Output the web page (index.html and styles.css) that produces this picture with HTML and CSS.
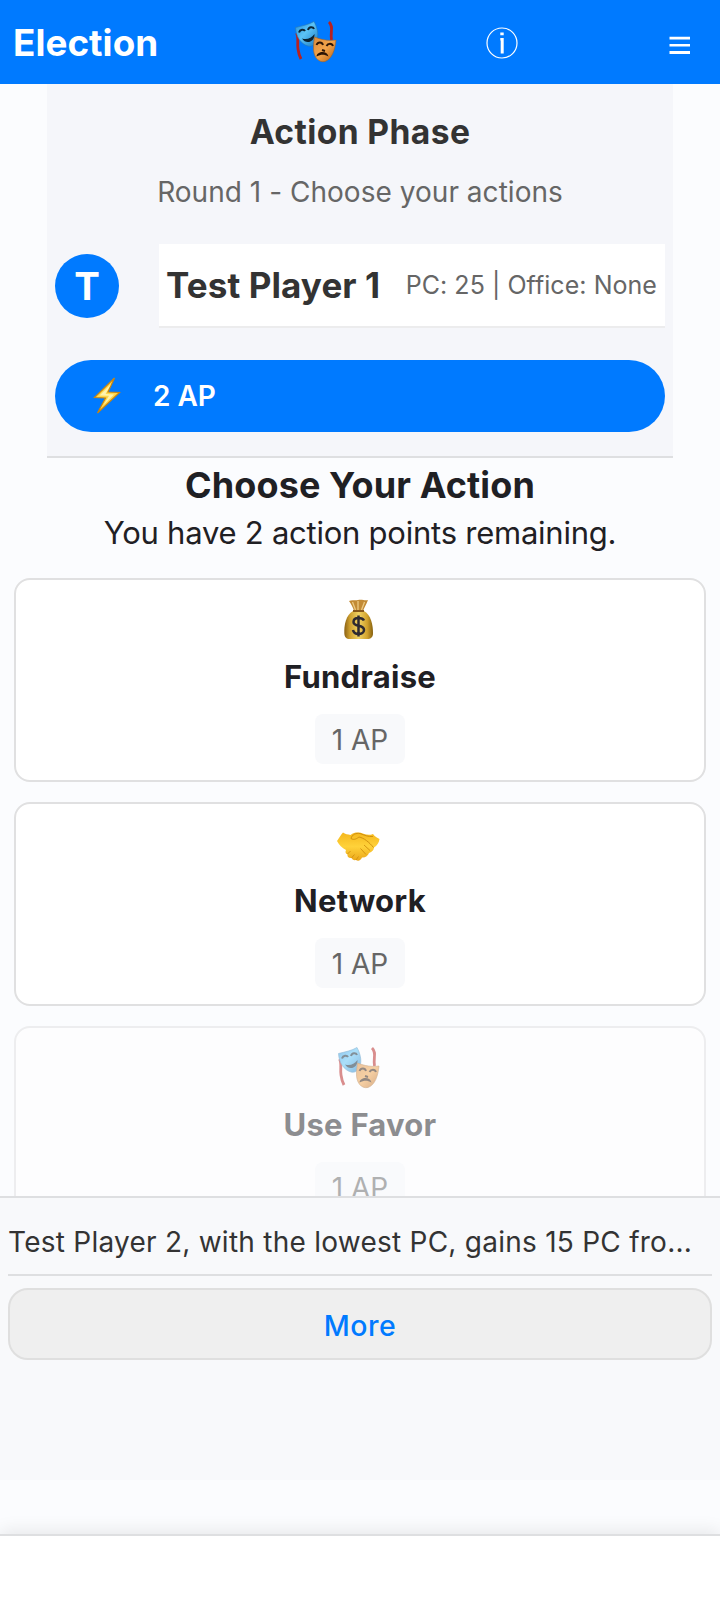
FILE: index.html
```html
<!DOCTYPE html>
<html lang="en">
<head>
<meta charset="utf-8">
<title>Election</title>
<link rel="stylesheet" href="styles.css">
</head>
<body>
<svg class="defs" aria-hidden="true">
  <defs>
    <linearGradient id="blue" x1="0" y1="0" x2="1" y2="1"><stop offset="0" stop-color="#238fdb"/><stop offset=".45" stop-color="#5cc3f7"/><stop offset="1" stop-color="#1779c4"/></linearGradient>
    <linearGradient id="orange" x1="0" y1="0" x2="1" y2="1"><stop offset="0" stop-color="#d98a3c"/><stop offset=".5" stop-color="#f3a54b"/><stop offset="1" stop-color="#b35d12"/></linearGradient>
    <linearGradient id="bag"><stop offset="0" stop-color="#8a6114"/><stop offset=".2" stop-color="#cfa02e"/><stop offset=".5" stop-color="#f0d264"/><stop offset=".8" stop-color="#d2a22c"/><stop offset="1" stop-color="#85600f"/></linearGradient>
    <linearGradient id="hand" x1="0" y1="0" x2="0" y2="1"><stop offset="0" stop-color="#f5b71c"/><stop offset=".5" stop-color="#ffd23a"/><stop offset="1" stop-color="#eba71a"/></linearGradient>
    <symbol id="masks" viewBox="0 0 44 44">
      <path d="M2.500 13C5 17 3 22 4 29C4.500 33 5.500 36 7 39" fill="none" stroke="#b8211f" stroke-width="2.800"/>
      <path d="M35 2C40 7 36 11 37.500 20" fill="none" stroke="#b8211f" stroke-width="2.800"/>
      <path d="M1.500 7.500C8 6 15 4.500 20 1.500C23 7 25 14 23 20C21 25 18 27 14 26C7 24 2 17 1.500 7.500Z" fill="url(#blue)" stroke="#2a78b0" stroke-width=".6"/>
      <path d="M5 12.500C6 9 10 9 11 11M14 10C15 6.500 19 6.500 20 9" fill="none" stroke="#0c2434" stroke-width="2"/>
      <path d="M8 18.500C13 20 17 18.500 20.500 14C21 22 12 25 8 18.500Z" fill="#0a2233"/>
      <path d="M20.500 17C28 20 35 21 42 20C41 30 38 39 31 41.500C24 43 19 36 19.500 27C19.700 23 20 20 20.500 17Z" fill="url(#orange)" stroke="#a76322" stroke-width=".6"/>
      <path d="M22.500 25C24 21.500 28 22 29 25M32.500 26C34 23 38 23 39 26M28 30L31 31" fill="none" stroke="#2f1707" stroke-width="1.900"/>
      <path d="M22.500 36.500C23 31 33 30 34.500 36.500C30 34 27 34.500 22.500 36.500Z" fill="#2b1405"/>
    </symbol>
    <symbol id="moneybag" viewBox="0 0 44 44">
      <path d="M12 3C15 1.500 18 3 21 2C25 1 28 3 31 2C29 7 27 10 26 13L17 13C16 9 14 6 12 3Z" fill="#c28a35"/>
      <path d="M15.500 4L18.500 12M21 3V12M27.500 4L24.500 12" stroke="#ecc983" stroke-width="1.300"/>
      <path d="M16 13C9 17 7 27 7.300 35C7.500 39 9 41 13 41H30C34 41 36 39 36 35C36 27 34 17 27 13Z" fill="url(#bag)"/>
      <path d="M16 13H27" stroke="#86571b" stroke-width="2"/>
      <path d="M27 22.500C26 20.500 24 20 21.500 20C18.500 20 16.500 21.500 16.500 24C16.500 29.500 27 26 27 32C27 34.500 24.500 36 21.500 36C18.500 36 16.500 34.500 16 32M21.500 17.500V38.500" fill="none" stroke="#2d2930" stroke-width="2.500"/>
    </symbol>
    <symbol id="handshake" viewBox="0 0 44 44">
      <g transform="translate(0 -4)">
      <path d="M0 23C2 20 4 16.500 6 14.500C8 16 11 16.500 13.500 17C16 15 18 14.500 21 14.500C26 14.500 30 18.500 36 16C38 19 41 20 42.500 21C42 25 40 27.500 37 29.500C37 32 35 34 32 35C31 38 28 40 25 39.500C24 42.500 21 43.500 19 42C17 42.500 15 41.500 14.500 40C12 40.500 10 39 10.500 36.500C8.500 36 8 34 9 32C5 30 2 27 0 23Z" fill="url(#hand)"/>
      <path d="M14 20.500C15 16.500 19 14.800 23 15.500C27 17 31 19 36 18.500M14 20.500C17 22.500 20 20.500 22 19C27 20 32 24 36.500 29.500" fill="none" stroke="#d0900f" stroke-width="1"/>
      <path d="M27 27L33 32.500M23.500 30.500L29 36.500M10.500 36L13.500 33M14.500 40L17.500 36.500M19 42L21.500 38.500" fill="none" stroke="#d0900f" stroke-width=".9"/>
      </g>
    </symbol>
  </defs>
</svg>

<header class="topbar">
  <h1 class="brand">Election</h1>
  <svg class="emoji"><use href="#masks"/></svg>
  <svg class="info" viewBox="0 0 34 34"><circle cx="17" cy="17" r="15" fill="none" stroke="#fff" stroke-width="1.200"/><path d="M15.300 6.500h3.400v2.800h-3.400zM15.300 12h3.400v15.500h-3v-13h-.4z" fill="#fff"/></svg>
  <svg class="menu" viewBox="0 0 22 20"><path d="M.5 1.800h20.500v2.700H.5zM.5 8.900h20.500v2.700H.5zM.5 16h20.500v2.900H.5z" fill="#fff"/></svg>
</header>

<main class="content">
  <section class="phase">
    <h2 class="phase-title">Action Phase</h2>
    <p class="phase-sub">Round 1 - Choose your actions</p>
    <div class="player">
      <div class="avatar">T</div>
      <div class="player-card">
        <span class="player-name">Test Player 1</span>
        <span class="player-stats">PC: 25 | Office: None</span>
      </div>
    </div>
    <div class="points">
      <svg class="bolt" viewBox="0 0 28 38"><path d="M21.500 1L1.500 20.500L12.500 21L4.500 36L26.500 15.500L15 15Z" fill="#ffd84d" stroke="#c98510" stroke-width="1.200"/><path d="M18 7L6.500 18.500L16 18.800L10.500 28L21 17.500L12.500 17Z" fill="#fff3b0"/></svg>
      <span class="points-label">2 AP</span>
    </div>
  </section>

  <section class="actions">
    <h2 class="actions-title">Choose Your Action</h2>
    <p class="actions-sub">You have 2 action points remaining.</p>
    <div class="cards">
      <article class="card">
        <svg class="emoji"><use href="#moneybag"/></svg>
        <h3 class="card-title">Fundraise</h3>
        <span class="cost">1 AP</span>
      </article>
      <article class="card">
        <svg class="emoji"><use href="#handshake"/></svg>
        <h3 class="card-title">Network</h3>
        <span class="cost">1 AP</span>
      </article>
      <article class="card disabled">
        <svg class="emoji"><use href="#masks"/></svg>
        <h3 class="card-title">Use Favor</h3>
        <span class="cost">1 AP</span>
      </article>
    </div>
  </section>
</main>

<section class="log">
  <p class="log-entry">Test Player 2, with the lowest PC, gains 15 PC fro...</p>
  <button class="more">More</button>
</section>
<footer class="bottombar"></footer>
</body>
</html>
```
FILE: styles.css
```css
* { box-sizing: border-box; }
body {
  margin: 0;
  height: 1600px;
  overflow: hidden;
  display: flex;
  flex-direction: column;
  background: #fbfcfe;
  color: #1f2024;
  font-family: Inter, "Liberation Sans", sans-serif;
}
h1, h2, h3, p { margin: 0; }
.defs { position: absolute; width: 0; height: 0; }
.emoji { display: block; width: 44px; height: 44px; flex: none; }

.topbar {
  flex: none;
  height: 84px;
  padding: 0 29px 0 13px;
  display: flex;
  align-items: center;
  justify-content: space-between;
  background: #007aff;
  color: #fff;
}
.brand { width: 133.7px; font-size: 36.8px; line-height: 84px; padding-top: 2px; font-weight: 700; letter-spacing: 0.05px; white-space: nowrap; }
.info { width: 34px; height: 34px; margin: 1px 3px 0 0; }
.menu { width: 22px; height: 20px; margin-top: 6px; }

.content { flex: none; height: 1112px; overflow: hidden; }
.phase {
  width: 626px;
  margin: 0 auto;
  padding: 24px 8px;
  background: #f5f6fa;
  border-bottom: 2px solid #dedfe1;
}
.phase-title { text-align: center; color: #333; font-size: 33.6px; line-height: 48px; font-weight: 700; letter-spacing: 0.4px; }
.phase-sub { margin-top: 16px; text-align: center; color: #666; font-size: 28px; line-height: 40px; letter-spacing: 0.03px; }
.player { margin-top: 32px; display: flex; align-items: center; justify-content: space-between; }
.avatar {
  width: 64px; height: 64px;
  border-radius: 50%;
  background: #007aff;
  color: #fff;
  text-align: center;
  font-size: 38.4px; line-height: 64px; font-weight: 700;
}
.player-card {
  width: 506px; height: 84px;
  padding: 0 8px;
  display: flex; align-items: center; justify-content: space-between;
  background: #fff;
  border-bottom: 2px solid #ececed;
  white-space: nowrap;
}
.player-name { margin-left: -1px; color: #333; font-size: 35px; font-weight: 700; letter-spacing: 0.1px; }
.player-stats { color: #666; font-size: 25px; letter-spacing: 0.05px; }
.points {
  margin-top: 32px;
  height: 72px;
  padding-left: 38px;
  display: flex; align-items: center; gap: 32px;
  border-radius: 36px;
  background: #007aff;
  color: #fff;
}
.bolt { width: 28px; height: 38px; margin: 0 0 1px 0; }
.points-label { font-size: 28px; font-weight: 600; }

.actions { padding: 4px 14px 0; text-align: center; }
.actions-title { font-size: 36px; line-height: 46px; font-weight: 700; letter-spacing: 0.1px; }
.actions-sub { font-size: 31px; line-height: 50px; letter-spacing: -0.24px; }
.cards { margin-top: 20px; display: grid; gap: 20px; }
.card {
  height: 204px;
  padding: 18px 0 0;
  display: flex; flex-direction: column; align-items: center;
  background: #fff;
  border: 2px solid #e0e0e1;
  border-radius: 16px;
}
.card .emoji { margin-right: 3px; }
.card-title { margin-top: 15px; font-size: 31px; line-height: 40px; font-weight: 700; letter-spacing: 0.25px; }
.cost {
  width: 90px; height: 50px;
  margin-top: 17px;
  border-radius: 8px;
  background: #f8f9fb;
  color: #666;
  font-size: 28px; line-height: 53px;
}
.disabled { opacity: .5; }

.log {
  flex: none;
  height: 284px;
  padding: 0 8px;
  background: #f8f9fb;
  border-top: 2px solid #dedfe1;
}
.log-entry {
  height: 78px;
  padding-top: 14px;
  border-bottom: 2px solid #dedfe1;
  color: #333;
  font-size: 28px; line-height: 61px; letter-spacing: 0.25px;
  white-space: nowrap;
}
.more {
  display: block;
  width: 100%; height: 72px;
  margin-top: 12px;
  padding: 3px 0 0;
  background: #efefef;
  border: 2px solid #dfdfdf;
  border-radius: 20px;
  color: #007aff;
  font: 500 28.5px/65px Inter, "Liberation Sans", sans-serif;
  letter-spacing: 0.5px;
}
.bottombar {
  height: 66px;
  flex: none;
  margin-top: 54px;
  background: #fff;
  border-top: 2px solid #dedfe1;
  box-shadow: 0 -4px 16px rgba(0, 0, 0, .08);
}
```
